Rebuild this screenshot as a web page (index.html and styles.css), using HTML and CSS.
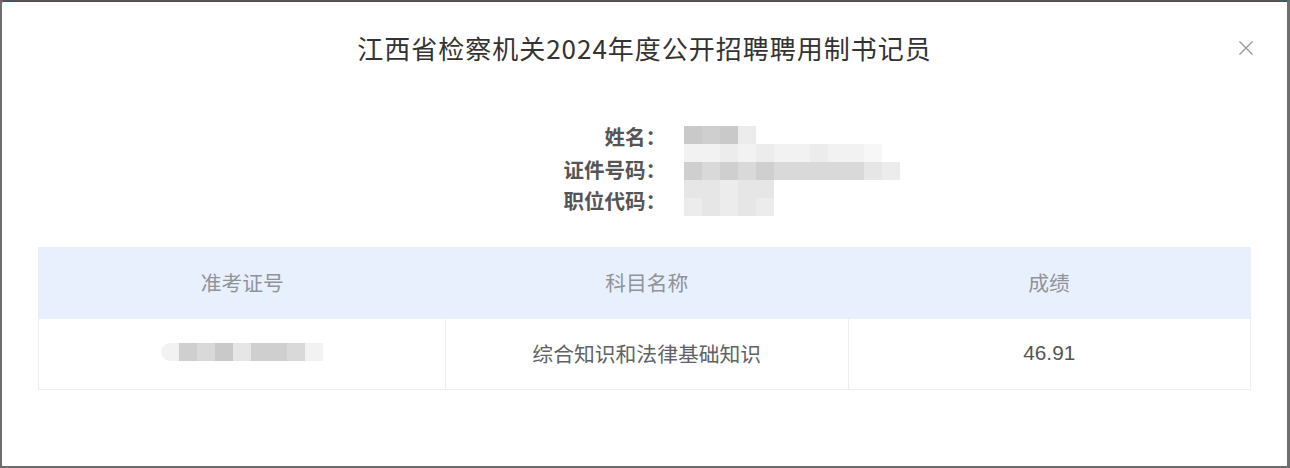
FILE: index.html
```html
<!DOCTYPE html>
<html lang="zh-CN">
<head>
<meta charset="utf-8">
<title>成绩查询</title>
<link rel="stylesheet" href="styles.css">
</head>
<body>
<div class="dialog">
  <div class="dialog-header">
    <span></span>
    <h1 class="title">江西省检察机关2024年度公开招聘聘用制书记员</h1>
    <button class="close" aria-label="关闭">
      <svg width="16" height="16" viewBox="0 0 16 16"><path d="M1.5 1.5 L14.5 14.5 M14.5 1.5 L1.5 14.5" stroke="#9a9a9a" stroke-width="1.4" fill="none"/></svg>
    </button>
  </div>

  <div class="info">
    <div class="label r1">姓名：</div>
    <div class="label r2">证件号码：</div>
    <div class="label r3">职位代码：</div>
    <div class="mosaic">
      <span class="c1"></span><span class="c2"></span><span class="c1"></span><span class="c5"></span><span></span><span></span><span></span><span></span><span></span><span></span><span></span><span></span>
      <span class="c6"></span><span class="c6"></span><span class="c5"></span><span class="c6"></span><span class="c5"></span><span class="c6"></span><span class="c6"></span><span class="c5"></span><span class="c6"></span><span class="c6"></span><span class="c7"></span><span></span>
      <span class="c2"></span><span class="c3"></span><span class="c2"></span><span class="c3"></span><span class="c2"></span><span class="c3"></span><span class="c3"></span><span class="c3"></span><span class="c3"></span><span class="c3"></span><span class="c4"></span><span class="c5"></span>
      <span class="c4"></span><span class="c4"></span><span class="c5"></span><span class="c4"></span><span class="c4"></span><span></span><span></span><span></span><span></span><span></span><span></span><span></span>
      <span class="c5"></span><span class="c4"></span><span class="c5"></span><span class="c4"></span><span class="c5"></span><span></span><span></span><span></span><span></span><span></span><span></span><span></span>
    </div>
  </div>

  <table class="score">
    <thead>
      <tr><th>准考证号</th><th>科目名称</th><th>成绩</th></tr>
    </thead>
    <tbody>
      <tr>
        <td><div class="mosaic-line"><span class="c6 round"></span><span class="c2"></span><span class="c3"></span><span class="c1"></span><span class="c4"></span><span class="c2"></span><span class="c2"></span><span class="c3"></span><span class="c6"></span></div></td>
        <td>综合知识和法律基础知识</td>
        <td class="num">46.91</td>
      </tr>
    </tbody>
  </table>
</div>
</body>
</html>
```

FILE: styles.css
```css
* { box-sizing: border-box; }

html, body {
  margin: 0;
  padding: 0;
  width: 1290px;
  height: 468px;
  overflow: hidden;
  background: #6a6a6a;
}

body {
  font-family: "Noto Sans CJK SC", "Noto Sans", "Liberation Sans", sans-serif;
  color: #606266;
}

.dialog {
  width: 1290px;
  height: 468px;
  background: #fff;
  border-top: 1px solid #555;
  border-left: 2px solid #6e6e6e;
  border-right: 3px solid #6e6e6e;
  border-bottom: 2px solid #6e6e6e;
  border-radius: 3px;
  padding: 29px 36px 0 36px;
  box-shadow: inset 0 1px 0 #1f5d73;
}

.dialog-header {
  display: grid;
  grid-template-columns: 1fr auto 1fr;
  align-items: center;
  height: 36px;
}

.title {
  margin: 0;
  font-size: 26px;
  line-height: 36px;
  font-weight: 400;
  color: #333;
  letter-spacing: 1px;
}

.close {
  justify-self: end;
  width: 16px;
  height: 16px;
  padding: 0;
  margin-right: -3px;
  border: 0;
  background: none;
  display: flex;
}

.info {
  display: grid;
  grid-template-columns: 628px 220px;
  grid-template-rows: 34px 32px 30px;
  column-gap: 18px;
  margin-top: 53px;
}

.label {
  grid-column: 1;
  text-align: right;
  font-size: 20.5px;
  font-weight: 700;
  color: #555;
}
.r1 { grid-row: 1; line-height: 34px; }
.r2 { grid-row: 2; line-height: 32px; }
.r3 { grid-row: 3; line-height: 30px; }

.mosaic {
  grid-column: 2;
  grid-row: 1 / 4;
  display: grid;
  grid-template-columns: repeat(12, 18px);
  grid-auto-rows: 18px;
  margin-top: 7px;
}

.c1 { background: #c9c9c9; }
.c2 { background: #cfcfcf; }
.c3 { background: #d9d9d9; }
.c4 { background: #e6e6e6; }
.c5 { background: #ececec; }
.c6 { background: #f2f2f2; }
.c7 { background: #f7f7f7; }

.score {
  width: 1213px;
  margin-top: 32px;
  border-collapse: collapse;
  table-layout: fixed;
  border: 1px solid #ebeef5;
}

.score th {
  height: 71px;
  background: #e8f0fd;
  color: #909399;
  font-size: 20.8px;
  font-weight: 400;
  padding: 0 0 3px 0;
  text-align: center;
}

.score th:first-child { width: 407px; }

.score td {
  height: 71px;
  font-size: 20.8px;
  color: #606266;
  text-align: center;
  border-top: 1px solid #ebeef5;
  border-left: 1px solid #ebeef5;
  padding: 0 0 3px 0;
}

.score td.num {
  font-family: "Liberation Sans", "Noto Sans CJK SC", sans-serif;
  color: #555;
}

.mosaic-line {
  display: flex;
  justify-content: center;
  margin-top: -2px;
}
.mosaic-line span { width: 18px; height: 18px; }
.mosaic-line .round { border-radius: 9px 0 0 9px; }
```
